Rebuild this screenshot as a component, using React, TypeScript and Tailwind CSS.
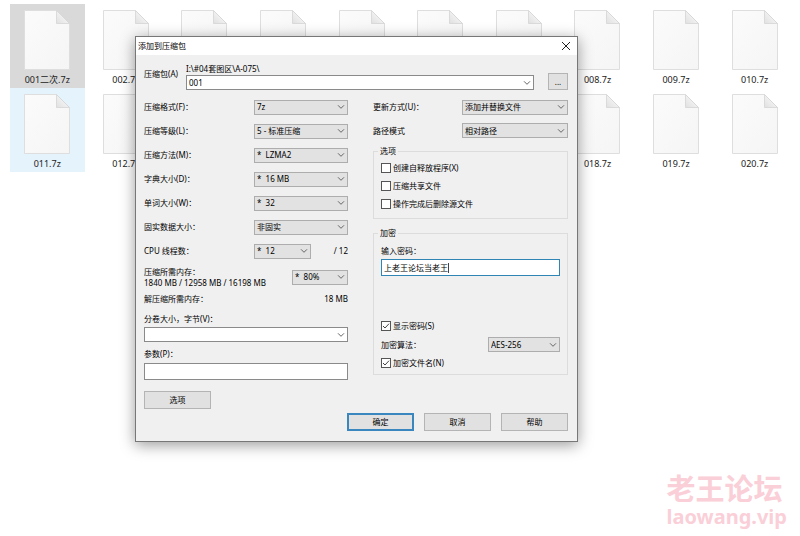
import { useState } from 'react';
import type { ReactNode } from 'react';

interface FileEntry {
  name: string;
  state?: 'selected' | 'hover';
}

const files: FileEntry[] = [
  { name: '001二次.7z', state: 'selected' },
  { name: '002.7z' },
  { name: '003.7z' },
  { name: '004.7z' },
  { name: '005.7z' },
  { name: '006.7z' },
  { name: '007.7z' },
  { name: '008.7z' },
  { name: '009.7z' },
  { name: '010.7z' },
  { name: '011.7z', state: 'hover' },
  { name: '012.7z' },
  { name: '013.7z' },
  { name: '014.7z' },
  { name: '015.7z' },
  { name: '016.7z' },
  { name: '017.7z' },
  { name: '018.7z' },
  { name: '019.7z' },
  { name: '020.7z' },
];

const compressionRows = [
  { id: 'format', label: '压缩格式(F)：', value: '7z' },
  { id: 'level', label: '压缩等级(L)：', value: '5 - 标准压缩' },
  { id: 'method', label: '压缩方法(M)：', value: '*\u00a0 LZMA2' },
  { id: 'dictionary', label: '字典大小(D)：', value: '*\u00a0 16 MB' },
  { id: 'word', label: '单词大小(W)：', value: '*\u00a0 32' },
  { id: 'solid', label: '固实数据大小：', value: '非固实' },
];

function FileIcon() {
  return (
    <svg viewBox="0 0 46 60" className="w-[46px] h-[60px]" aria-hidden="true">
      <defs>
        <linearGradient id="paper" x1="0" y1="0" x2="1" y2="1">
          <stop offset="0" stopColor="#fbfbfb" />
          <stop offset="1" stopColor="#f5f5f5" />
        </linearGradient>
        <linearGradient id="fold" x1="0" y1="1" x2="1" y2="0">
          <stop offset="0" stopColor="#e0e0e0" />
          <stop offset="0.6" stopColor="#f3f3f3" />
        </linearGradient>
      </defs>
      <path d="M.5.5h32l13 13v46H.5z" fill="url(#paper)" stroke="#dedede" />
      <path d="M32.5.5v13h13z" fill="url(#fold)" stroke="#d4d4d4" strokeWidth="0.8" />
    </svg>
  );
}

function FileItem({ name, state }: FileEntry) {
  const background =
    state === 'selected' ? 'bg-[#d9d9d9]' : state === 'hover' ? 'bg-[#e5f3fd]' : '';
  return (
    <li className={`mx-[2px] h-[84px] pt-[6px] flex flex-col items-center gap-1 ${background}`}>
      <FileIcon />
      <span className="text-[9px] leading-3 text-[#222]">{name}</span>
    </li>
  );
}

function Chevron() {
  return (
    <svg
      viewBox="0 0 8 5"
      className="absolute right-[3px] top-1/2 -translate-y-1/2 w-2 h-[5px] pointer-events-none"
      fill="none"
      stroke="#666"
      aria-hidden="true"
    >
      <path d="M1 .8l3 3 3-3" />
    </svg>
  );
}

interface SelectProps {
  id: string;
  value: string;
  className: string;
}

function Select({ id, value, className }: SelectProps) {
  return (
    <div className={`relative shrink-0 ${className}`}>
      <select
        id={id}
        className="block w-full h-[15px] pl-[2px] pr-3 appearance-none border border-[#adadad] bg-[#e2e2e2] leading-3"
      >
        <option>{value}</option>
      </select>
      <Chevron />
    </div>
  );
}

function ComboBox({ id, defaultValue }: { id: string; defaultValue?: string }) {
  return (
    <div className="relative">
      <input
        id={id}
        type="text"
        role="combobox"
        aria-expanded="false"
        defaultValue={defaultValue}
        className="block w-full h-[15px] pl-[2px] pr-4 border border-[#8a8a8a] bg-white leading-3"
      />
      <Chevron />
    </div>
  );
}

function Checkbox({ label, defaultChecked = false }: { label: string; defaultChecked?: boolean }) {
  const [checked, setChecked] = useState(defaultChecked);
  return (
    <label className="flex items-center gap-[2px] leading-3">
      <span className="relative size-[10px]">
        <input
          type="checkbox"
          checked={checked}
          onChange={() => setChecked(!checked)}
          className="block size-[10px] appearance-none border border-[#555] bg-white"
        />
        {checked && (
          <svg
            viewBox="0 0 10 10"
            className="absolute inset-0 size-[10px] pointer-events-none"
            fill="none"
            stroke="#444"
            aria-hidden="true"
          >
            <path d="M2 5l2 2 4-4.3" />
          </svg>
        )}
      </span>
      {label}
    </label>
  );
}

function Group({ title, className, children }: { title: string; className: string; children: ReactNode }) {
  return (
    <fieldset className={`min-w-0 border border-[#dcdcdc] px-[7px] ${className}`}>
      <legend className="-ml-[3px] px-[2px] leading-3">{title}</legend>
      {children}
    </fieldset>
  );
}

function Button({ children, primary = false }: { children: ReactNode; primary?: boolean }) {
  return (
    <button
      type="button"
      className={`w-[67px] h-[18px] bg-[#e1e1e1] leading-3 ${
        primary ? 'border-2 border-[#3a87c0]' : 'border border-[#b4b4b4]'
      }`}
    >
      {children}
    </button>
  );
}

function CompressionSettings() {
  return (
    <div className="min-w-0">
      {compressionRows.map((row) => (
        <div key={row.id} className="h-6 flex items-center justify-between">
          <label htmlFor={row.id}>{row.label}</label>
          <Select id={row.id} value={row.value} className="w-[94px]" />
        </div>
      ))}
      <div className="h-6 flex items-center">
        <label htmlFor="threads" className="flex-1">CPU 线程数：</label>
        <Select id="threads" value={'*\u00a0 12'} className="w-[57px]" />
        <span className="w-[37px] text-right">/ 12</span>
      </div>
      <div className="h-7 flex items-center justify-between">
        <label htmlFor="memory" className="leading-[11px] whitespace-nowrap">
          压缩所需内存：
          <br />
          1840 MB / 12958 MB / 16198 MB
        </label>
        <Select id="memory" value={'*\u00a0 80%'} className="w-[56px]" />
      </div>
      <div className="mt-[2px] flex justify-between">
        <span>解压缩所需内存：</span>
        <span>18 MB</span>
      </div>
      <label htmlFor="volume" className="block mt-2 mb-[2px]">分卷大小，字节(V)：</label>
      <ComboBox id="volume" />
      <label htmlFor="params" className="block mt-[6px] mb-[3px]">参数(P)：</label>
      <input
        id="params"
        type="text"
        className="block w-full h-[17px] px-[3px] border border-[#8a8a8a] bg-white"
      />
      <div className="mt-[11px] flex">
        <Button>选项</Button>
      </div>
    </div>
  );
}

function ArchiveOptions() {
  const [password, setPassword] = useState('上老王论坛当老王');

  return (
    <div className="min-w-0">
      <div className="h-6 flex items-center justify-between">
        <label htmlFor="update">更新方式(U)：</label>
        <Select id="update" value="添加并替换文件" className="w-[106px]" />
      </div>
      <div className="h-[23px] flex items-center justify-between">
        <label htmlFor="path">路径模式</label>
        <Select id="path" value="相对路径" className="w-[106px]" />
      </div>

      <Group title="选项" className="mt-[3px] h-[74px]">
        <div className="pt-[5px] flex flex-col gap-[6px]">
          <Checkbox label="创建自释放程序(X)" />
          <Checkbox label="压缩共享文件" />
          <Checkbox label="操作完成后删除源文件" />
        </div>
      </Group>

      <Group title="加密" className="mt-2 h-[148px]">
        <label htmlFor="password" className="block mt-[6px] mb-[2px]">输入密码：</label>
        <div className="h-[17px] flex items-center border border-[#2f86b5] bg-white px-[2px]">
          <input
            id="password"
            type="text"
            value={password}
            onChange={(e) => setPassword(e.target.value)}
            className="[field-sizing:content] max-w-full leading-3 outline-none caret-transparent"
          />
          <span className="w-px h-[10px] bg-[#444]" />
        </div>
        <div className="mt-11">
          <Checkbox label="显示密码(S)" defaultChecked />
          <div className="h-[25px] flex items-center justify-between">
            <label htmlFor="cipher">加密算法：</label>
            <Select id="cipher" value="AES-256" className="w-[72px]" />
          </div>
          <Checkbox label="加密文件名(N)" defaultChecked />
        </div>
      </Group>
    </div>
  );
}

function ArchiveDialog() {
  return (
    <section
      role="dialog"
      aria-labelledby="dialog-title"
      className="absolute left-[135px] top-9 w-[443px] border border-[#777] bg-[#f0f0f0] text-[8px] leading-3 text-black shadow-[0_3px_14px_rgba(0,0,0,0.4)]"
    >
      <header className="h-[18px] bg-white pl-[2px] pr-[6px] flex items-center justify-between">
        <h1 id="dialog-title">添加到压缩包</h1>
        <button type="button" aria-label="关闭">
          <svg viewBox="0 0 10 10" className="size-[10px]" stroke="#222" aria-hidden="true">
            <path d="M1 1l8 8M9 1l-8 8" />
          </svg>
        </button>
      </header>

      <div className="pt-2 pb-[10px] pl-2 pr-[9px]">
        <div className="flex items-end">
          <label htmlFor="archive" className="w-[42px] mb-[10px]">压缩包(A)</label>
          <div className="flex-1">
            <div>I:\#04套图区\A-075\</div>
            <ComboBox id="archive" defaultValue="001" />
          </div>
          <button
            type="button"
            aria-label="浏览"
            className="ml-[14px] w-5 h-[17px] border border-[#b4b4b4] bg-[#e1e1e1]"
          >
            ...
          </button>
        </div>

        <div className="mt-[5px] grid grid-cols-[204fr_195fr] gap-[25px]">
          <CompressionSettings />
          <ArchiveOptions />
        </div>

        <footer className="mt-1 flex justify-end gap-[10px]">
          <Button primary>确定</Button>
          <Button>取消</Button>
          <Button>帮助</Button>
        </footer>
      </div>
    </section>
  );
}

export default function App() {
  return (
    <main
      lang="zh-CN"
      className="relative min-h-screen overflow-hidden bg-white font-['Noto_Sans','Noto_Sans_CJK_SC',sans-serif]"
    >
      <ul className="grid grid-cols-10 pt-1 pl-2 pr-[6px]">
        {files.map((file) => (
          <FileItem key={file.name} {...file} />
        ))}
      </ul>

      <ArchiveDialog />

      <div className="absolute right-[13px] bottom-[5px] font-bold text-[#facfd8]">
        <div className="text-[29px] leading-7">老王论坛</div>
        <div className="text-[20px] leading-7">laowang.vip</div>
      </div>
    </main>
  );
}
